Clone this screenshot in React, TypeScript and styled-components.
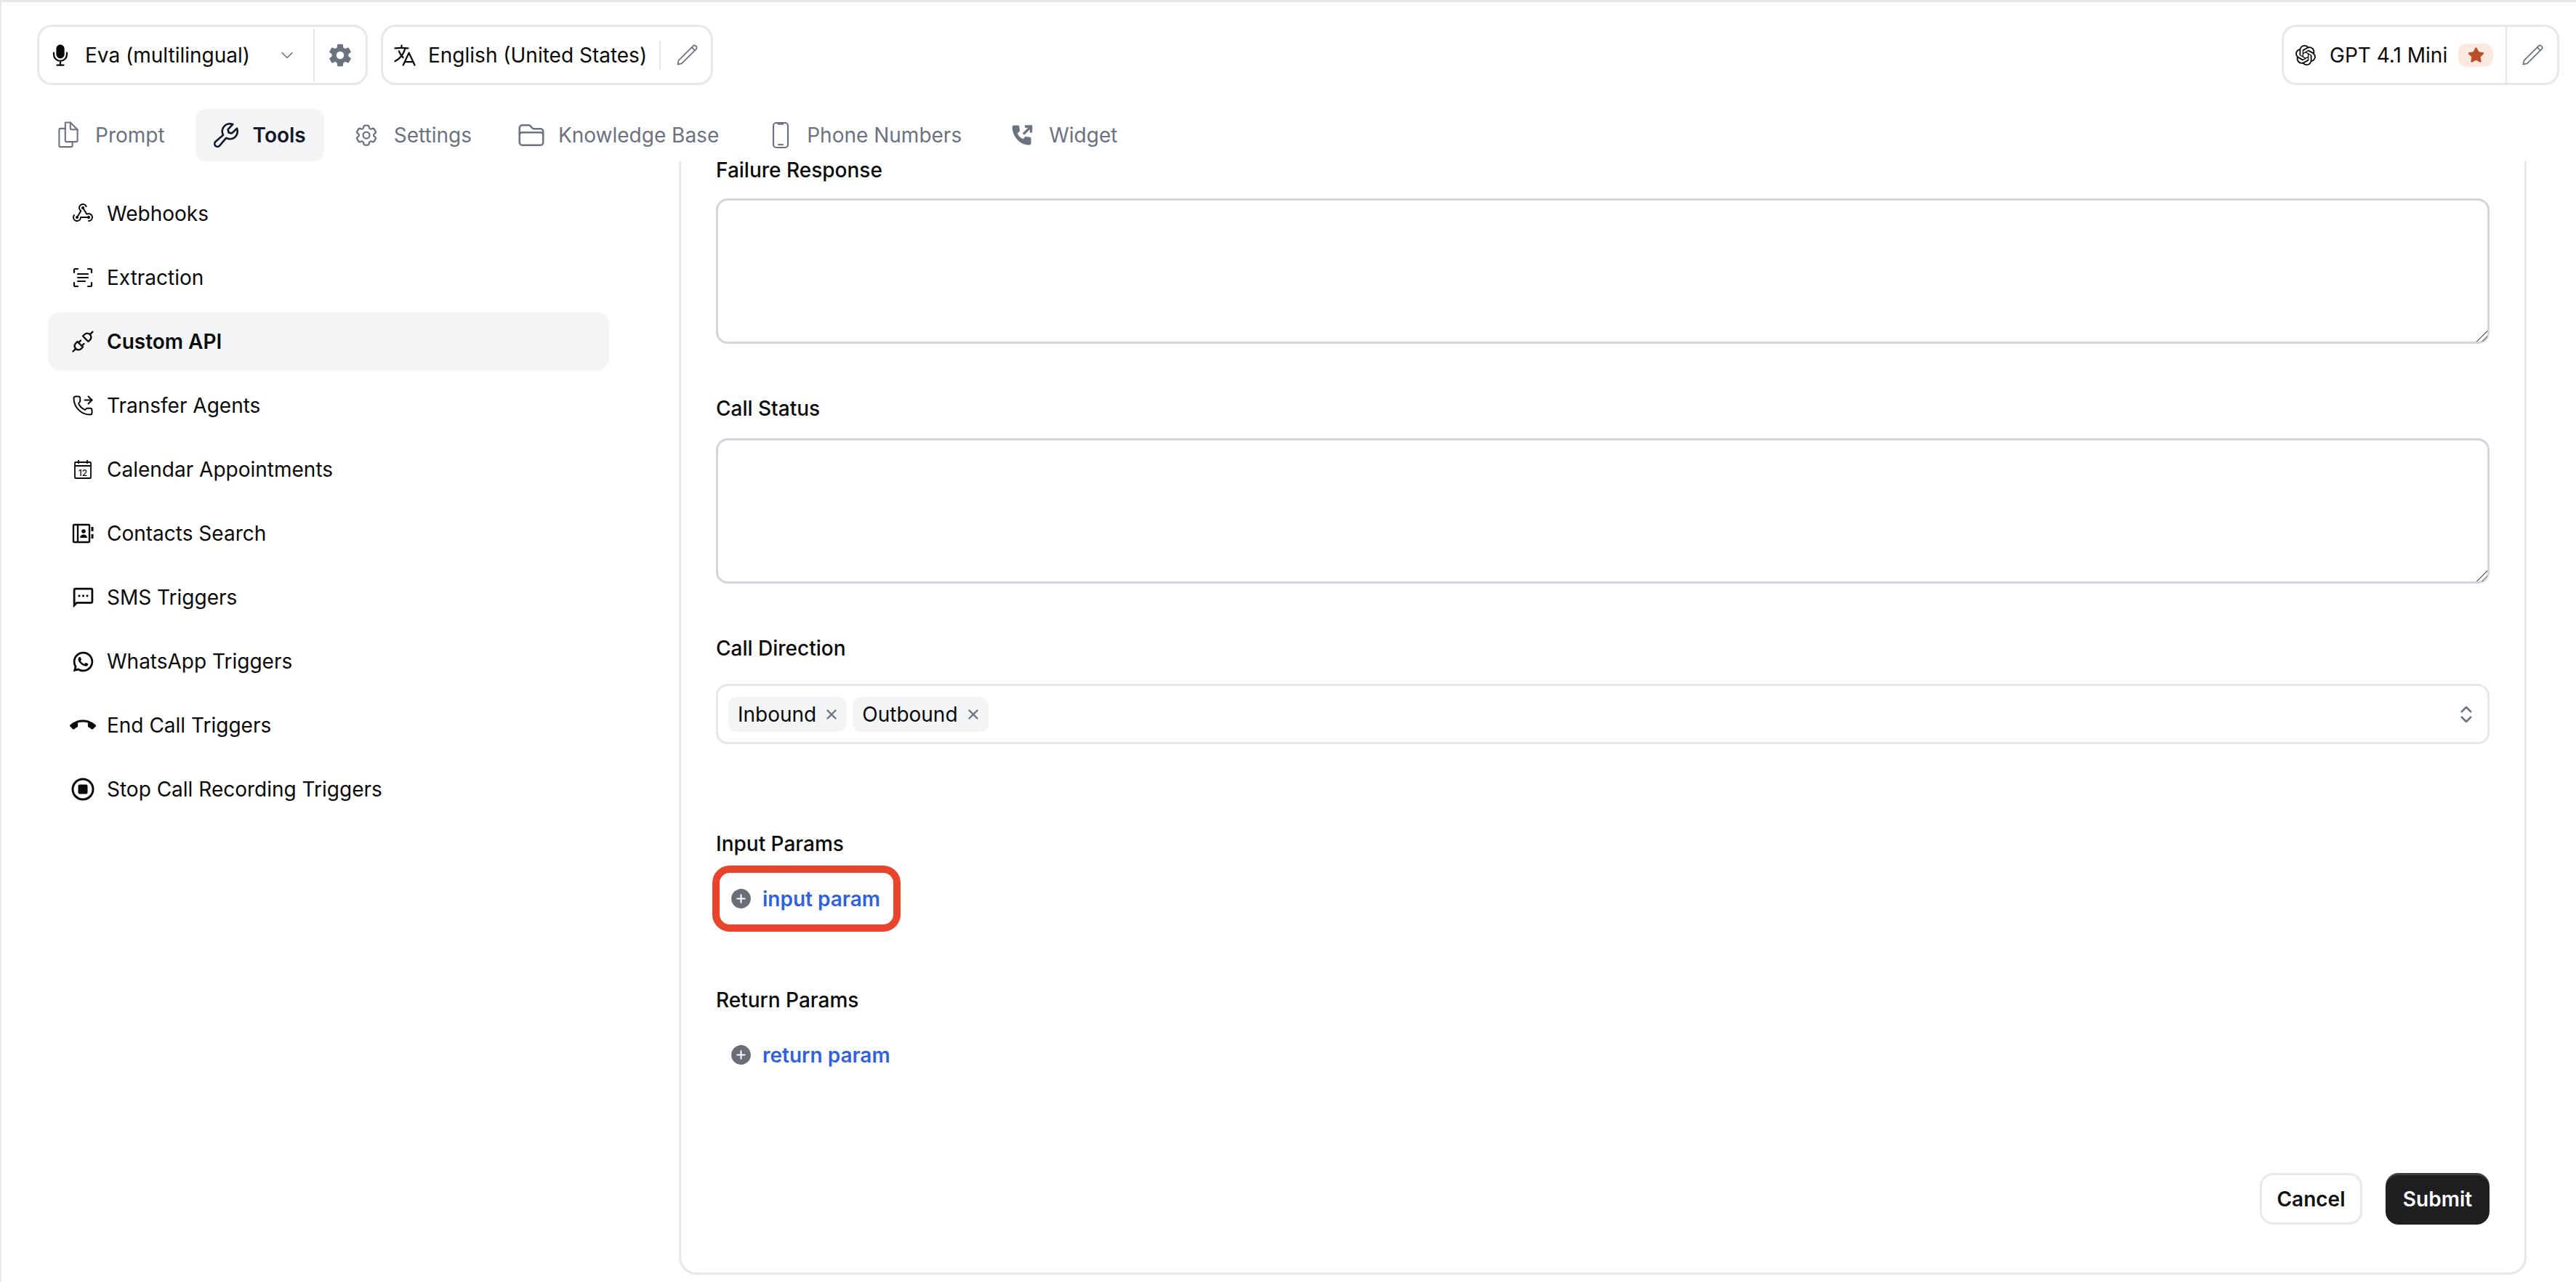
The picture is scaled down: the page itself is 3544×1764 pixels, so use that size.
import React from "react";
import styled, { createGlobalStyle } from "styled-components";
import { ChevronDown, ChevronsUpDown, PhoneForwarded, X } from "lucide-react";
import { FaStar } from "react-icons/fa";
import { HiOutlineCog6Tooth, HiOutlineFolder, HiOutlineLanguage } from "react-icons/hi2";
import { IoAddCircle, IoMic, IoSettingsSharp } from "react-icons/io5";
import { MdCallEnd, MdOutlineSms } from "react-icons/md";
import { PiWebhooksLogo, PiWrench } from "react-icons/pi";
import { RiWhatsappLine } from "react-icons/ri";
import { SiOpenai } from "react-icons/si";
import { TbPlugConnected } from "react-icons/tb";

const GlobalStyle = createGlobalStyle`
  html, body {
    margin: 0;
    padding: 0;
    background: #fff;
  }
  * {
    box-sizing: border-box;
  }
  svg {
    flex: none;
  }
`;

const Page = styled.div`
  width: 3544px;
  height: 1764px;
  display: flex;
  flex-direction: column;
  overflow: hidden;
  background: #fff;
  border-top: 3px solid #e5e7eb;
  border-left: 2px solid #e5e7eb;
  font-family: Inter, "Liberation Sans", sans-serif;
  font-size: 28px;
  color: #0a0a0a;
`;

const TopBar = styled.header`
  display: flex;
  align-items: center;
  justify-content: space-between;
  height: 83px;
  margin-top: 31px;
  padding: 0 23px 0 49px;
`;

const TopGroup = styled.div`
  display: flex;
  gap: 18px;
`;

const PickerBox = styled.div<{ $width: number; $pad: number }>`
  display: flex;
  align-items: center;
  width: ${(p) => p.$width}px;
  height: 83px;
  border: 3px solid #e5e7eb;
  border-radius: 20px;
  padding-left: ${(p) => p.$pad}px;
`;

const PickerLabel = styled.span<{ $gapLeft: number; $width: number }>`
  margin-left: ${(p) => p.$gapLeft}px;
  width: ${(p) => p.$width}px;
  white-space: nowrap;
`;

const PickerDivider = styled.span<{ $height: number; $left?: number; $right: number }>`
  width: 2px;
  height: ${(p) => p.$height}px;
  margin-left: ${(p) => p.$left ?? 0}px;
  margin-right: ${(p) => p.$right}px;
  background: #e5e7eb;
  flex: none;
`;

const ModelBadge = styled.span`
  display: flex;
  align-items: center;
  justify-content: center;
  width: 48px;
  height: 32px;
  border-radius: 12px;
  background: #fbe9df;
  color: #b84f28;
  font-size: 23px;
`;

const Tabs = styled.nav`
  display: flex;
  align-items: center;
  height: 72px;
  margin-top: 33px;
  padding-left: 53px;
`;

const Tab = styled.div<{ $active?: boolean; $gap: number; $left?: number }>`
  display: flex;
  align-items: center;
  gap: ${(p) => p.$gap}px;
  height: 72px;
  padding: 0 25px;
  margin-left: ${(p) => p.$left ?? 0}px;
  border-radius: 14px;
  background: ${(p) => (p.$active ? "#f3f4f6" : "transparent")};
  color: ${(p) => (p.$active ? "#111827" : "#6b7280")};
  font-weight: ${(p) => (p.$active ? 600 : 400)};
  white-space: nowrap;
`;

const ToolsIcon = styled(PiWrench)`
  margin-left: -4px;
`;

const Body = styled.div`
  flex: 1;
  min-height: 0;
  display: flex;
  padding-right: 68px;
`;

const Sidebar = styled.aside`
  width: 772px;
  margin-left: 64px;
  padding-top: 32px;
  display: flex;
  flex-direction: column;
  gap: 8px;
`;

const SideRow = styled.div<{ $active?: boolean }>`
  display: flex;
  align-items: center;
  height: 80px;
  padding-left: 32px;
  border-radius: 16px;
  background: ${(p) => (p.$active ? "#f3f4f6" : "transparent")};
  font-weight: ${(p) => (p.$active ? 600 : 400)};
`;

const SideIcon = styled.span`
  display: flex;
  align-items: center;
  justify-content: center;
  width: 32px;
  height: 36px;
  margin-right: 17px;
`;

const Panel = styled.main`
  flex: 1;
  display: flex;
  flex-direction: column;
  margin-left: 96px;
  margin-bottom: 10px;
  padding: 0 48px 66px 48px;
  border: 3px solid #e5e7eb;
  border-top: none;
  border-radius: 0 0 24px 24px;
`;

const FieldLabel = styled.label<{ $top: number; $gap: number }>`
  display: block;
  margin-top: ${(p) => p.$top}px;
  margin-bottom: ${(p) => p.$gap}px;
  line-height: 24px;
  font-weight: 500;
`;

const TextBox = styled.textarea`
  display: block;
  width: 100%;
  height: 200px;
  flex: none;
  border: 3px solid #d1d5db;
  border-radius: 16px;
  background: #fff;
  resize: vertical;
  outline: none;

  &::-webkit-resizer {
    background: linear-gradient(
      135deg,
      transparent 0 48%,
      #777 48% 56%,
      transparent 56% 72%,
      #999 72% 80%,
      transparent 80%
    );
  }
`;

const MultiSelect = styled.div`
  display: flex;
  align-items: center;
  gap: 8px;
  height: 83px;
  flex: none;
  padding: 0 14px;
  border: 3px solid #e5e7eb;
  border-radius: 16px;
`;

const Chip = styled.span`
  display: flex;
  align-items: center;
  gap: 10px;
  height: 48px;
  padding: 0 10px 0 13px;
  border-radius: 12px;
  background: #f3f4f6;
`;

const Spacer = styled.span`
  flex: 1;
`;

const AddButton = styled.div<{ $marked?: boolean }>`
  display: flex;
  align-items: center;
  align-self: flex-start;
  gap: 13px;
  height: 91px;
  margin-left: -5px;
  padding: 0 18px 0 13px;
  border: 10px solid ${(p) => (p.$marked ? "#ea432c" : "transparent")};
  border-radius: 24px;
  color: #2f62e0;
  font-weight: 600;
`;

const ButtonRow = styled.div`
  display: flex;
  justify-content: flex-end;
  gap: 32px;
  margin-top: auto;
`;

const Button = styled.button<{ $primary?: boolean }>`
  height: 71px;
  padding: 0;
  width: ${(p) => (p.$primary ? 143 : 141)}px;
  border-radius: 18px;
  border: ${(p) => (p.$primary ? "none" : "3px solid #e8e8e8")};
  background: ${(p) => (p.$primary ? "#1f1f22" : "#fff")};
  color: ${(p) => (p.$primary ? "#fff" : "#111")};
  box-shadow: ${(p) => (p.$primary ? "inset 0 3px 0 rgba(255,255,255,.14)" : "none")};
  font-family: inherit;
  font-size: 28px;
  font-weight: 600;
`;

const PencilIcon = () => (
  <svg width="38" height="38" viewBox="0 0 24 24" fill="none" stroke="#6b7280" strokeWidth="1.100" strokeLinejoin="round" strokeLinecap="round">
    <path d="M4 20l.8-3.500L17.500 3.800a1.400 1.400 0 0 1 2 0l.7.7a1.400 1.400 0 0 1 0 2L7.500 19.200z" />
    <path d="M16.200 5.100l2.700 2.700" />
  </svg>
);

const PromptIcon = () => (
  <svg width="28" height="38" viewBox="2 1 20 27" fill="none" stroke="currentColor" strokeWidth="1.500" strokeLinejoin="round" strokeLinecap="round">
    <path d="M9 2h5l7 7v11a1 1 0 0 1-1 1H10a1 1 0 0 1-1-1z" />
    <path d="M14 2v6a1 1 0 0 0 1 1h6" />
    <path d="M9 8H4a1 1 0 0 0-1 1v16a1 1 0 0 0 1 1h11a1 1 0 0 0 1-1v-4" />
  </svg>
);

const PhoneIcon = () => (
  <svg width="24" height="38" viewBox="0 0 24 38" fill="none" stroke="currentColor" strokeWidth="2.200" strokeLinecap="round">
    <rect x="2" y="2" width="20" height="34" rx="4" />
    <path d="M9 3h6" strokeWidth="3.400" />
    <path d="M9 32h6" />
  </svg>
);

const WidgetIcon = () => (
  <svg width="30" height="30" viewBox="0 0 30 30" fill="currentColor">
    <path d="M3 1.500h5.500c1 0 1.700.7 1.800 1.600l.6 5.500c.1.700-.2 1.300-.7 1.700l-2.500 1.900c1.500 3.800 4.300 6.600 8.100 8.100l1.900-2.500c.4-.5 1-.8 1.700-.7l5.500.6c.9.1 1.600.8 1.600 1.800V26c0 1.400-1 2.500-2.400 2.500C12 28.500 1 17.500.6 3.900.6 2.500 1.600 1.500 3 1.500z" />
    <path d="M16 13.500L25 4.500M18 3h8.500v8.500" fill="none" stroke="currentColor" strokeWidth="3.400" />
  </svg>
);

const ExtractionIcon = () => (
  <svg width="28" height="28" viewBox="0 0 28 28" fill="none" stroke="currentColor" strokeWidth="2.200" strokeLinecap="round">
    <path d="M2 7V3.500A1.500 1.500 0 0 1 3.500 2H7M21 2h3.500A1.500 1.500 0 0 1 26 3.500V7M26 21v3.500a1.500 1.500 0 0 1-1.500 1.500H21M7 26H3.500A1.500 1.500 0 0 1 2 24.500V21" />
    <path d="M7 9h14M7 14h14M7 19h10" />
  </svg>
);

const CalendarIcon = () => (
  <svg width="26" height="28" viewBox="0 0 26 28" fill="none" stroke="currentColor" strokeWidth="1.800">
    <rect x="2" y="4" width="22" height="22" rx="1" />
    <path d="M2 9h22M7 1v5M19 1v5" />
    <text x="13" y="22.500" fontFamily="Inter, sans-serif" fontSize="12" fontWeight="500" fill="currentColor" stroke="none" textAnchor="middle">12</text>
  </svg>
);

const ContactsIcon = () => (
  <svg width="30" height="28" viewBox="0 0 30 28" fill="none" stroke="currentColor" strokeWidth="2.400">
    <rect x="2" y="2" width="22" height="24" rx="1" />
    <path d="M8 2v24" />
    <circle cx="16" cy="11" r="2.800" fill="currentColor" stroke="none" />
    <path d="M11 20c.3-3 2.300-4.500 5-4.500s4.700 1.500 5 4.500z" fill="currentColor" stroke="none" />
    <path d="M28 5v6M28 15v6" strokeWidth="3" />
  </svg>
);

const StopIcon = () => (
  <svg width="32" height="32" viewBox="0 0 32 32">
    <circle cx="16" cy="16" r="14" fill="none" stroke="currentColor" strokeWidth="3" />
    <rect x="9.500" y="9.500" width="13" height="13" rx="2" fill="currentColor" />
  </svg>
);

const tools = [
  { name: "Webhooks", icon: <PiWebhooksLogo size={32} /> },
  { name: "Extraction", icon: <ExtractionIcon /> },
  { name: "Custom API", icon: <TbPlugConnected size={36} strokeWidth={1.600} />, active: true },
  { name: "Transfer Agents", icon: <PhoneForwarded size={30} strokeWidth={1.600} /> },
  { name: "Calendar Appointments", icon: <CalendarIcon /> },
  { name: "Contacts Search", icon: <ContactsIcon /> },
  { name: "SMS Triggers", icon: <MdOutlineSms size={33} /> },
  { name: "WhatsApp Triggers", icon: <RiWhatsappLine size={33} /> },
  { name: "End Call Triggers", icon: <MdCallEnd size={36} /> },
  { name: "Stop Call Recording Triggers", icon: <StopIcon /> },
];

const App = () => {
  return (
    <Page>
      <GlobalStyle />
      <TopBar>
        <TopGroup>
          <PickerBox $width={455} $pad={11}>
            <IoMic size={36} />
            <PickerLabel $gapLeft={16} $width={264}>Eva (multilingual)</PickerLabel>
            <ChevronDown size={28} color="#6b7280" strokeWidth={1.400} />
            <PickerDivider $height={72} $left={22} $right={18} />
            <IoSettingsSharp size={34} color="#6b7280" />
          </PickerBox>
          <PickerBox $width={457} $pad={12}>
            <HiOutlineLanguage size={36} />
            <PickerLabel $gapLeft={14} $width={318}>English (United States)</PickerLabel>
            <PickerDivider $height={40} $right={17} />
            <PencilIcon />
          </PickerBox>
        </TopGroup>
        <PickerBox $width={382} $pad={16}>
          <SiOpenai size={28} />
          <PickerLabel $gapLeft={19} $width={177}>GPT 4.1 Mini</PickerLabel>
          <ModelBadge><FaStar /></ModelBadge>
          <PickerDivider $height={77} $left={17} $right={16} />
          <PencilIcon />
        </PickerBox>
      </TopBar>

      <Tabs>
        <Tab $gap={23}><PromptIcon />Prompt</Tab>
        <Tab $gap={16} $left={17} $active><ToolsIcon size={42} />Tools</Tab>
        <Tab $gap={20} $left={15}><HiOutlineCog6Tooth size={36} />Settings</Tab>
        <Tab $gap={17} $left={12}><HiOutlineFolder size={40} />Knowledge Base</Tab>
        <Tab $gap={24} $left={23}><PhoneIcon />Phone Numbers</Tab>
        <Tab $gap={21} $left={19}><WidgetIcon />Widget</Tab>
      </Tabs>

      <Body>
        <Sidebar>
          {tools.map((tool) => (
            <SideRow key={tool.name} $active={tool.active}>
              <SideIcon>{tool.icon}</SideIcon>
              {tool.name}
            </SideRow>
          ))}
        </Sidebar>

        <Panel>
          <FieldLabel $top={0} $gap={27}>Failure Response</FieldLabel>
          <TextBox />
          <FieldLabel $top={77} $gap={29}>Call Status</FieldLabel>
          <TextBox />
          <FieldLabel $top={77} $gap={37}>Call Direction</FieldLabel>
          <MultiSelect>
            <Chip>Inbound <X size={22} color="#6b7280" strokeWidth={2.600} /></Chip>
            <Chip>Outbound <X size={22} color="#6b7280" strokeWidth={2.600} /></Chip>
            <Spacer />
            <ChevronsUpDown size={30} color="#6b7280" strokeWidth={2} />
          </MultiSelect>
          <FieldLabel $top={125} $gap={18}>Input Params</FieldLabel>
          <AddButton $marked>
            <IoAddCircle size={33} color="#6b6d78" />
            input param
          </AddButton>
          <FieldLabel $top={82} $gap={18}>Return Params</FieldLabel>
          <AddButton>
            <IoAddCircle size={33} color="#6b6d78" />
            return param
          </AddButton>
          <ButtonRow>
            <Button>Cancel</Button>
            <Button $primary>Submit</Button>
          </ButtonRow>
        </Panel>
      </Body>
    </Page>
  );
};

export default App;
